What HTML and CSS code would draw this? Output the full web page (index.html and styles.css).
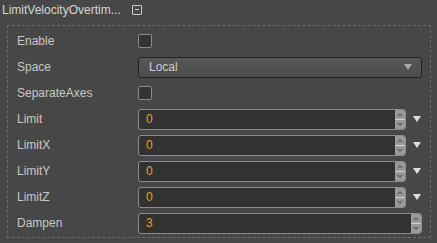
FILE: index.html
```html
<!DOCTYPE html>
<html lang="en">
<head>
  <meta charset="UTF-8">
  <title>LimitVelocityOvertimeModule</title>
  <link rel="stylesheet" href="styles.css">
</head>
<body>
  <div class="header">
    <span class="title">LimitVelocityOvertim...</span>
    <span class="fold"></span>
  </div>

  <div class="props">
    <div class="row">
      <span class="label">Enable</span>
      <span class="check"></span>
    </div>

    <div class="row">
      <span class="label">Space</span>
      <div class="select">
        <span>Local</span>
        <svg class="caret" width="8" height="6" viewBox="0 0 8 6"><path d="M0 0H8L4 6Z"/></svg>
      </div>
    </div>

    <div class="row">
      <span class="label">SeparateAxes</span>
      <span class="check"></span>
    </div>

    <div class="row">
      <span class="label">Limit</span>
      <div class="num">
        <span class="value">0</span>
        <div class="spin"><span class="up"></span><span class="down"></span></div>
      </div>
      <span class="curve"><svg width="8" height="6" viewBox="0 0 8 6"><path d="M0 0H8L4 6Z"/></svg></span>
    </div>

    <div class="row">
      <span class="label">LimitX</span>
      <div class="num">
        <span class="value">0</span>
        <div class="spin"><span class="up"></span><span class="down"></span></div>
      </div>
      <span class="curve"><svg width="8" height="6" viewBox="0 0 8 6"><path d="M0 0H8L4 6Z"/></svg></span>
    </div>

    <div class="row">
      <span class="label">LimitY</span>
      <div class="num">
        <span class="value">0</span>
        <div class="spin"><span class="up"></span><span class="down"></span></div>
      </div>
      <span class="curve"><svg width="8" height="6" viewBox="0 0 8 6"><path d="M0 0H8L4 6Z"/></svg></span>
    </div>

    <div class="row">
      <span class="label">LimitZ</span>
      <div class="num">
        <span class="value">0</span>
        <div class="spin"><span class="up"></span><span class="down"></span></div>
      </div>
      <span class="curve"><svg width="8" height="6" viewBox="0 0 8 6"><path d="M0 0H8L4 6Z"/></svg></span>
    </div>

    <div class="row">
      <span class="label">Dampen</span>
      <div class="num">
        <span class="value">3</span>
        <div class="spin"><span class="up"></span><span class="down"></span></div>
      </div>
    </div>
  </div>
</body>
</html>
```

FILE: styles.css
```css
body {
  margin: 0;
  background-color: #474747;
  font-family: "Liberation Sans", Arial, sans-serif;
  font-size: 12px;
  color: #cccccc;
}
.header {
  display: flex;
  align-items: center;
  height: 20px;
  padding-left: 2px;
}
.title {
  color: #d6d6d6;
  width: 130px;
  white-space: nowrap;
}
.fold {
  position: relative;
  width: 8px;
  height: 8px;
  border: 1px solid #c8c8c8;
  border-radius: 1px;
}
.fold::after {
  content: "";
  position: absolute;
  left: 2px;
  top: 3px;
  width: 4px;
  height: 1px;
  background: #c8c8c8;
}
.props {
  margin: 5px 6px 0 7px;
  border: 1px dashed #6a6a6a;
  padding: 2px 8px 1px 0;
}
.row {
  display: flex;
  align-items: center;
  height: 26px;
}
.label {
  width: 130px;
  padding-left: 9px;
  box-sizing: border-box;
  color: #c8c8c8;
}
.check {
  width: 12px;
  height: 12px;
  border: 1px solid #8a8a8a;
  border-radius: 2px;
  background: #333333;
}
.select {
  flex: 1;
  display: flex;
  align-items: center;
  justify-content: space-between;
  height: 19px;
  padding: 0 9px 0 10px;
  border: 1px solid #232323;
  border-radius: 3px;
  background: linear-gradient(#575757, #4c4c4c);
  color: #cccccc;
}
.caret {
  fill: #a8a8a8;
}
.num {
  flex: 1;
  display: flex;
  height: 19px;
  border: 1px solid #8c8c8c;
  border-radius: 3px;
  background: #323232;
  overflow: hidden;
}
.value {
  flex: 1;
  padding-left: 7px;
  line-height: 19px;
  color: #f39b1e;
}
.spin {
  width: 10px;
  display: flex;
  flex-direction: column;
  background: #9a9a9a;
}
.spin span {
  flex: 1;
  position: relative;
}
.up {
  border-bottom: 1px solid #cfcfcf;
}
.up::after, .down::after {
  content: "";
  position: absolute;
  left: 3px;
  width: 3px;
  height: 3px;
  border-left: 1px solid #555;
  border-top: 1px solid #555;
}
.up::after {
  top: 4px;
  transform: rotate(45deg);
}
.down::after {
  top: 1px;
  transform: rotate(225deg);
}
.curve {
  width: 16px;
  padding-right: 1px;
  box-sizing: border-box;
  display: flex;
  justify-content: flex-end;
  fill: #dedede;
}
```
